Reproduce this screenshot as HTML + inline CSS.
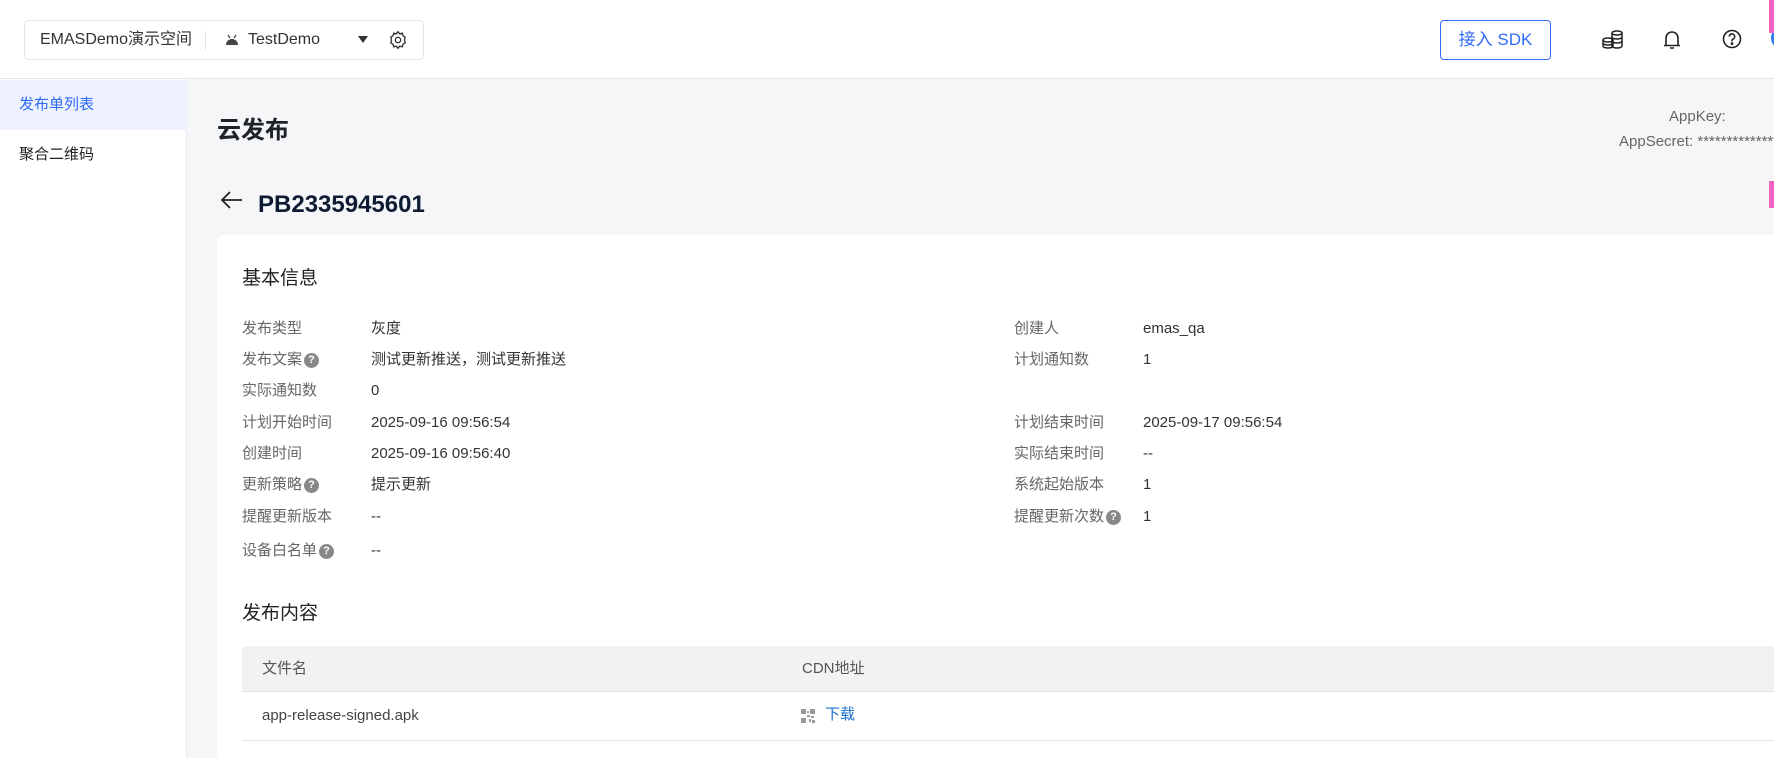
<!DOCTYPE html>
<html><head><meta charset="utf-8">
<style>
*{margin:0;padding:0;box-sizing:border-box}
html,body{width:1774px;height:758px;overflow:hidden}
body{background:#f5f6f8;font-family:"Liberation Sans","Noto Sans CJK SC",sans-serif;position:relative;color:#333}
.a{position:absolute;white-space:nowrap}
.hdr{position:absolute;left:0;top:0;width:1774px;height:79px;background:#fff;border-bottom:1px solid #e6e8ef}
.side{position:absolute;left:0;top:79px;width:187px;height:679px;background:#fff;border-right:1px solid #e6e8ef}
.lbl{color:#666;font-size:15px;line-height:20px}
.val{color:#333;font-size:15px;line-height:20px}
.q{display:inline-block;width:15px;height:15px;border-radius:50%;background:#888;color:#fff;font-size:11px;font-weight:bold;text-align:center;line-height:15px;vertical-align:1px;margin-left:2px}
</style></head><body>
<div class="hdr"></div>
<div class="a" style="left:24px;top:20px;width:400px;height:40px;border:1px solid #e3e6ee;border-radius:5px;background:#fff"></div>
<div class="a" style="left:40px;top:30px;font-size:16px;color:#333;line-height:20px">EMASDemo演示空间</div>
<div class="a" style="left:205px;top:31px;width:1px;height:19px;background:#e3e6ee"></div>
<svg class="a" style="left:225px;top:34px" width="14" height="12" viewBox="0 0 14 12"><path d="M1 11 A6 6 0 0 1 13 11 Z" fill="#444"/><line x1="3" y1="1" x2="5" y2="4" stroke="#444" stroke-width="1.2"/><line x1="11" y1="1" x2="9" y2="4" stroke="#444" stroke-width="1.2"/></svg>
<div class="a" style="left:248px;top:30px;font-size:16px;color:#333;line-height:20px">TestDemo</div>
<div class="a" style="left:358px;top:36px;width:0;height:0;border-left:5px solid transparent;border-right:5px solid transparent;border-top:7px solid #333"></div>
<svg class="a" style="left:388px;top:30px" width="20" height="20" viewBox="0 0 24 24" fill="none" stroke="#333" stroke-width="1.6"><circle cx="12" cy="12" r="3.2"/><path d="M12 2l2 2.6 3.2-.8.8 3.2L20.6 8.5 19.8 12l.8 3.5-2.6 1.5-.8 3.2-3.2-.8L12 22l-2-2.6-3.2.8-.8-3.2L3.4 15.5 4.2 12 3.4 8.5 6 7l.8-3.2 3.2.8z"/></svg>
<div class="a" style="left:1440px;top:20px;width:111px;height:40px;border:1px solid #2f6bf6;border-radius:4px;color:#2f6bf6;font-size:17px;line-height:38px;text-align:center">接入 SDK</div>
<svg class="a" style="left:1602px;top:30px" width="21" height="19" viewBox="0 0 21 19" fill="none" stroke="#222" stroke-width="1.5"><ellipse cx="6" cy="10" rx="5" ry="2"/><path d="M1 10v6c0 1.1 2.2 2 5 2s5-.9 5-2v-6M1 13c0 1.1 2.2 2 5 2s5-.9 5-2"/><ellipse cx="15" cy="3" rx="5" ry="2"/><path d="M10 3v13c0 1.1 2.2 2 5 2s5-.9 5-2V3M10 7c0 1.1 2.2 2 5 2s5-.9 5-2M10 11c0 1.1 2.2 2 5 2s5-.9 5-2"/></svg>
<svg class="a" style="left:1662px;top:29px" width="20" height="21" viewBox="0 0 20 21" fill="none" stroke="#222" stroke-width="1.6"><path d="M4 16V9a6 6 0 0 1 12 0v7M2 16.5h16M8 19h4"/></svg>
<svg class="a" style="left:1722px;top:29px" width="20" height="20" viewBox="0 0 20 20" fill="none" stroke="#222" stroke-width="1.6"><circle cx="10" cy="10" r="8.5"/><path d="M7.3 7.6a2.7 2.7 0 1 1 3.7 2.5c-.7.3-1 .8-1 1.5v.8"/><circle cx="10" cy="14.6" r=".6" fill="#222"/></svg>
<div class="a" style="left:1771px;top:27px;width:22px;height:22px;border-radius:50%;background:#2f7bf6"></div>
<div class="a" style="left:1769px;top:0;width:5px;height:33px;background:#f062c0"></div>
<div class="a" style="left:1769px;top:181px;width:5px;height:27px;background:#f062c0"></div>

<div class="side"></div>
<div class="a" style="left:0;top:80px;width:187px;height:50px;background:#edf2fe"></div>
<div class="a" style="left:19px;top:95px;font-size:15px;color:#2f6bf6;line-height:20px">发布单列表</div>
<div class="a" style="left:19px;top:145px;font-size:15px;color:#222;line-height:20px">聚合二维码</div>

<div class="a" style="left:217px;top:117px;font-size:24px;font-weight:bold;color:#1f2329;line-height:28px">云发布</div>
<div class="a" style="left:1669px;top:107px;font-size:15px;color:#666;line-height:20px">AppKey:</div>
<div class="a" style="left:1619px;top:132px;font-size:15px;color:#666;line-height:20px">AppSecret: ***************</div>
<svg class="a" style="left:220px;top:190px" width="24" height="20" viewBox="0 0 24 20" fill="none" stroke="#222" stroke-width="1.8"><path d="M22 10H3M10 2L2 10l8 8"/></svg>
<div class="a" style="left:258px;top:190px;font-size:24px;font-weight:bold;color:#0f1a33;line-height:30px">PB2335945601</div>

<div class="a" style="left:217px;top:235px;width:1557px;height:523px;background:#fff;border-radius:6px 0 0 0"></div>
<div class="a" style="left:242px;top:267px;font-size:19px;color:#222;line-height:24px">基本信息</div>

<div class="a lbl" style="left:242px;top:319px">发布类型</div><div class="a val" style="left:371px;top:319px">灰度</div>
<div class="a lbl" style="left:242px;top:350px">发布文案<span class="q">?</span></div><div class="a val" style="left:371px;top:350px">测试更新推送，测试更新推送</div>
<div class="a lbl" style="left:242px;top:381px">实际通知数</div><div class="a val" style="left:371px;top:381px">0</div>
<div class="a lbl" style="left:242px;top:413px">计划开始时间</div><div class="a val" style="left:371px;top:413px">2025-09-16 09:56:54</div>
<div class="a lbl" style="left:242px;top:444px">创建时间</div><div class="a val" style="left:371px;top:444px">2025-09-16 09:56:40</div>
<div class="a lbl" style="left:242px;top:475px">更新策略<span class="q">?</span></div><div class="a val" style="left:371px;top:475px">提示更新</div>
<div class="a lbl" style="left:242px;top:507px">提醒更新版本</div><div class="a val" style="left:371px;top:507px">--</div>
<div class="a lbl" style="left:242px;top:541px">设备白名单<span class="q">?</span></div><div class="a val" style="left:371px;top:541px">--</div>

<div class="a lbl" style="left:1014px;top:319px">创建人</div><div class="a val" style="left:1143px;top:319px">emas_qa</div>
<div class="a lbl" style="left:1014px;top:350px">计划通知数</div><div class="a val" style="left:1143px;top:350px">1</div>
<div class="a lbl" style="left:1014px;top:413px">计划结束时间</div><div class="a val" style="left:1143px;top:413px">2025-09-17 09:56:54</div>
<div class="a lbl" style="left:1014px;top:444px">实际结束时间</div><div class="a val" style="left:1143px;top:444px">--</div>
<div class="a lbl" style="left:1014px;top:475px">系统起始版本</div><div class="a val" style="left:1143px;top:475px">1</div>
<div class="a lbl" style="left:1014px;top:507px">提醒更新次数<span class="q">?</span></div><div class="a val" style="left:1143px;top:507px">1</div>

<div class="a" style="left:242px;top:602px;font-size:19px;color:#222;line-height:24px">发布内容</div>
<div class="a" style="left:242px;top:646px;width:1532px;height:46px;background:#f2f2f2;border-bottom:1px solid #e4e4e4;border-radius:4px 0 0 0"></div>
<div class="a lbl" style="left:262px;top:659px;color:#555">文件名</div>
<div class="a lbl" style="left:802px;top:659px;color:#555">CDN地址</div>
<div class="a" style="left:242px;top:740px;width:1532px;height:1px;background:#e4e4e4"></div>
<div class="a val" style="left:262px;top:706px;color:#444">app-release-signed.apk</div>
<svg class="a" style="left:801px;top:709px" width="14" height="14" viewBox="0 0 14 14" fill="#999"><rect x="0" y="0" width="5" height="5"/><rect x="9" y="0" width="5" height="5"/><rect x="0" y="9" width="5" height="5"/><rect x="6" y="2" width="2" height="2"/><rect x="6" y="6" width="3" height="2"/><rect x="10" y="7" width="3" height="2"/><rect x="8" y="10" width="2" height="3"/><rect x="11" y="11" width="3" height="3"/></svg>
<div class="a" style="left:825px;top:705px;font-size:15px;color:#1a6fcf;line-height:20px">下载</div>
</body></html>
